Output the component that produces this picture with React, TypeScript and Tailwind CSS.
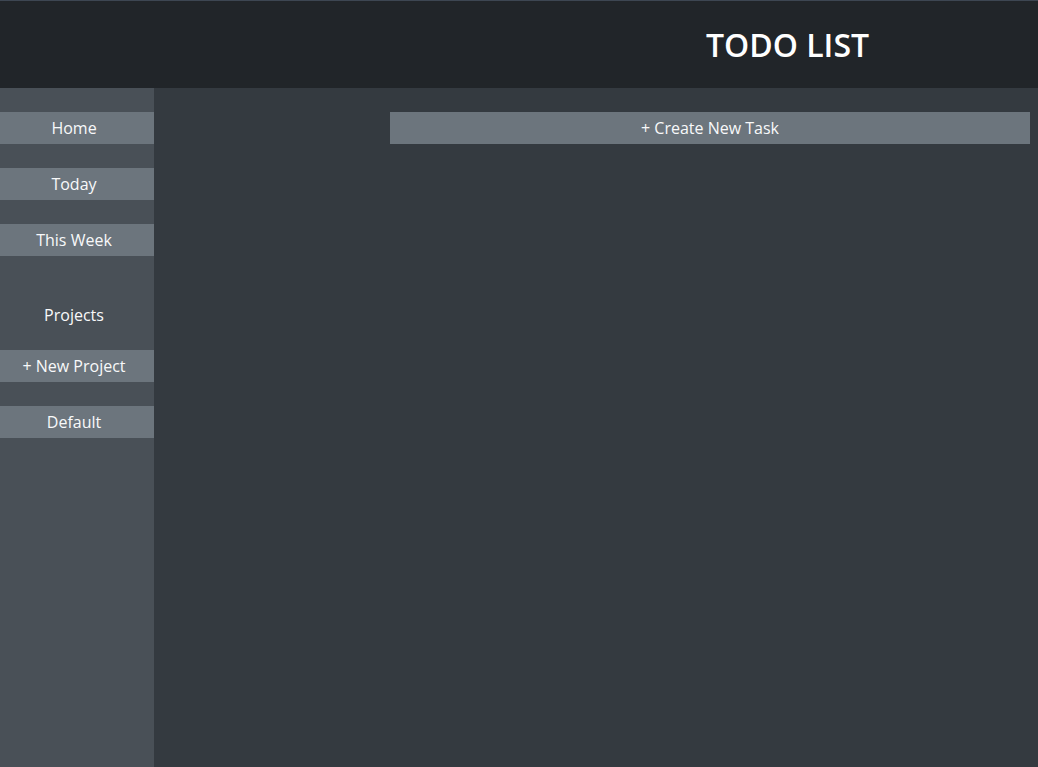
// Todo list layout: dark header, sidebar nav, main task area

const navItems = ['Home', 'Today', 'This Week']

function SideButton({ label }: { label: string }) {
  return (
    <button
      type="button"
      className="h-8 w-full bg-[#6c757d] pr-[6px] text-base text-[#f8f9fa] leading-8"
    >
      {label}
    </button>
  )
}

export default function App() {
  return (
    <div className="flex h-[767px] flex-col font-['Open_Sans',sans-serif] text-[#f8f9fa]">
      {/* Header */}
      <header className="flex h-[88px] shrink-0 items-center border-t border-[#3d4652] bg-[#212529] pl-[706px]">
        <h1 className="text-[32px] font-semibold text-white">TODO LIST</h1>
      </header>

      <div className="flex flex-1">
        {/* Sidebar */}
        <aside className="flex w-[154px] shrink-0 flex-col bg-[#495057] pt-6">
          <div className="flex flex-col gap-6">
            {navItems.map((item) => (
              <SideButton key={item} label={item} />
            ))}
          </div>
          <p className="mt-[47px] pr-[6px] text-center text-base leading-6">Projects</p>
          <div className="mt-[23px] flex flex-col gap-6">
            <SideButton label="+ New Project" />
            <SideButton label="Default" />
          </div>
        </aside>

        {/* Main */}
        <main className="flex-1 bg-[#343a40] pt-6 pr-2 pl-[236px]">
          <button
            type="button"
            className="h-8 w-full bg-[#6c757d] text-base leading-8 text-[#f8f9fa]"
          >
            + Create New Task
          </button>
        </main>
      </div>
    </div>
  )
}
